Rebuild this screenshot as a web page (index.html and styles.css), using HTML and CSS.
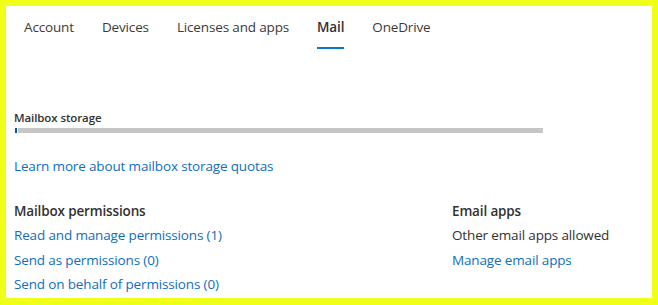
FILE: index.html
```html
<!DOCTYPE html>
<html lang="en">
<head>
    <meta charset="UTF-8">
    <meta name="viewport" content="width=device-width, initial-scale=1.0">
    <title>User - Mail</title>
    <link rel="stylesheet" href="styles.css">
</head>
<body>
    <div class="frame">
        <nav class="tabs">
            <a class="tab">Account</a>
            <a class="tab">Devices</a>
            <a class="tab">Licenses and apps</a>
            <a class="tab active">Mail</a>
            <a class="tab">OneDrive</a>
        </nav>

        <div class="content">
            <div class="storage">
                <div class="storage-label">Mailbox storage</div>
                <div class="storage-bar">
                    <div class="storage-used"></div>
                    <div class="storage-free"></div>
                </div>
            </div>

            <a class="link quota-link">Learn more about mailbox storage quotas</a>

            <div class="sections">
                <div class="section">
                    <div class="section-title">Mailbox permissions</div>
                    <a class="link">Read and manage permissions (1)</a>
                    <a class="link">Send as permissions (0)</a>
                    <a class="link">Send on behalf of permissions (0)</a>
                </div>
                <div class="section">
                    <div class="section-title">Email apps</div>
                    <div class="section-text">Other email apps allowed</div>
                    <a class="link">Manage email apps</a>
                </div>
            </div>
        </div>
    </div>
</body>
</html>
```

FILE: styles.css
```css
* {
    box-sizing: border-box;
}

html, body {
    margin: 0;
    padding: 0;
}

body {
    font-family: "Segoe UI", "Open Sans", sans-serif;
    font-size: 13.5px;
    letter-spacing: -0.15px;
    color: #323130;
    background-color: #f0ff17;
}

.frame {
    width: 658px;
    height: 305px;
    background-color: white;
    border: 6px solid #f0ff17;
    border-bottom-width: 7px;
    overflow: hidden;
}

.tabs {
    display: flex;
    gap: 28px;
    padding-left: 18px;
}

.tab {
    padding: 11px 0 10px;
    line-height: 20px;
    border-bottom: 2px solid transparent;
    color: #3b3a39;
}

.tab.active {
    font-weight: 600;
    color: #323130;
    border-bottom-color: #0078d4;
}

.content {
    padding: 0 8px;
}

.storage {
    margin-top: 61px;
}

.storage-label {
    font-size: 11.5px;
    letter-spacing: -0.1px;
    font-weight: 600;
    line-height: 16px;
    margin-bottom: 2px;
}

.storage-bar {
    display: flex;
    gap: 1px;
    width: 528px;
    height: 5px;
    margin-left: 1px;
}

.storage-used {
    width: 2px;
    background-color: #005a9e;
}

.storage-free {
    flex: 1;
    background-color: #c8c6c4;
}

.link {
    display: block;
    color: #106ebe;
    line-height: 24.5px;
    text-decoration: none;
}

.quota-link {
    margin-top: 21px;
}

.sections {
    display: grid;
    grid-template-columns: 438px 1fr;
    margin-top: 20px;
}

.section-title {
    font-weight: 600;
    line-height: 24.5px;
}

.section-text {
    line-height: 24.5px;
}
```
